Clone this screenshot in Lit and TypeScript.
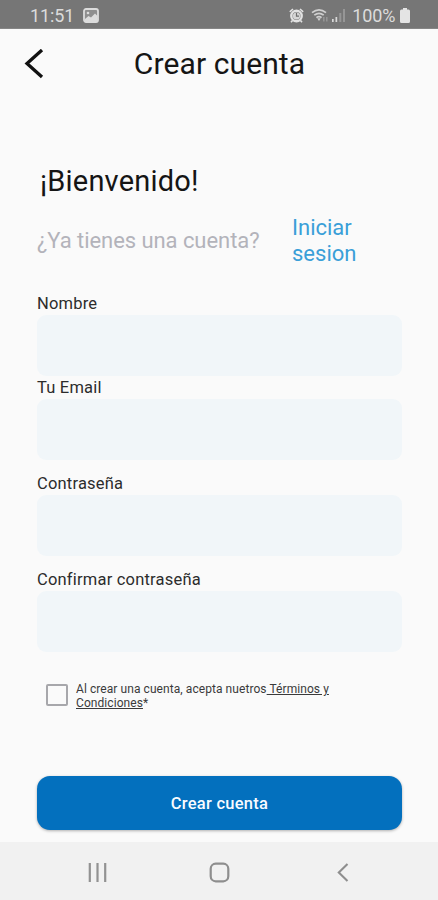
import { LitElement, html, css } from "lit";
import { customElement, property } from "lit/decorators.js";

@customElement("status-bar")
class StatusBar extends LitElement {
  static styles = css`
    :host { display: flex; align-items: center; box-sizing: border-box; height: 29px; padding: 2px 28.5px 0 30px; background: #767676; color: #dcdcdc; font-size: 18px; line-height: 27px; border-bottom: 1px solid #868686; }
    .time { letter-spacing: -0.1px; }
    svg { display: block; flex: none; }
    .picture { margin-left: 9px; }
    .spacer { flex: 1; }
    .wifi { margin-left: 7px; }
    .signal { margin-left: 3px; }
    .percent { margin: 0 4px 0 6px; letter-spacing: -0.05px; }
  `;
  render() {
    return html`
      <span class="time">11:51</span>
      <svg class="picture" width="16" height="15" viewBox="0 0 16 15">
        <rect x="1" y="1" width="14" height="13" rx="2" fill="#8e8e8e" stroke="#dcdcdc" stroke-width="1.8"/>
        <circle cx="5" cy="5" r="1.3" fill="#dcdcdc"/>
        <path d="M2 11 5.5 8 8 9.5 12 5.5 14.5 8V13H2Z" fill="#dcdcdc"/>
      </svg>
      <span class="spacer"></span>
      <svg width="15" height="15" viewBox="0 0 15 15">
        <circle cx="7.5" cy="8" r="5.2" fill="#7c7c7c" stroke="#e2e2e2" stroke-width="2.4"/>
        <circle cx="7.5" cy="8" r="3.6" fill="#d6d6d6"/>
        <path d="M.8 3.8 4 1M11 1l3.2 2.8M3.5 12.5 2 14.3M11.5 12.5l1.5 1.8" stroke="#e2e2e2" stroke-width="1.6"/>
        <path d="M7.5 5v3.2H10" fill="none" stroke="#6d6d6d" stroke-width="1.2"/>
      </svg>
      <svg class="wifi" width="18" height="15" viewBox="0 0 18 15" fill="none" stroke="#cfcfcf" stroke-width="1.7">
        <path d="M1 4.6Q8 -.9 15 4.6M3.3 7.2Q8 3.4 12.7 7.2M5.4 9.6Q8 7.6 10.6 9.6"/>
        <path d="M6.2 10.2H9.8L8 13Z" fill="#cfcfcf" stroke="none"/>
        <path d="M12.8 9v4.5M15.8 9v4.5" stroke="#989898" stroke-width="1.4"/>
      </svg>
      <svg class="signal" width="14" height="15" viewBox="0 0 14 15">
        <path d="M0 11h1.7v3H0ZM3.5 9h1.7v5H3.5Z" fill="#d8d8d8"/>
        <path d="M7.3 5h2v9h-2ZM11 1h2v13h-2Z" fill="#969696"/>
      </svg>
      <span class="percent">100%</span>
      <svg width="10" height="15" viewBox="0 0 10 15"><path d="M3 0h4v1.5h1.5Q10 1.5 10 3v10.5Q10 15 8.5 15h-7Q0 15 0 13.5V3Q0 1.5 1.5 1.5H3Z" fill="#e4e4e4"/></svg>
    `;
  }
}

@customElement("form-field")
class FormField extends LitElement {
  @property() label = "";
  static styles = css`
    :host { display: block; }
    label { display: block; font-size: 16.5px; letter-spacing: 0.2px; line-height: 20px; color: #2c2c2c; white-space: nowrap; }
    input { display: block; box-sizing: border-box; width: 100%; height: 61px; margin-top: 1px; padding: 0 16px; border: 0; border-radius: 9px; background: #f1f6f9; font: 17px Roboto, sans-serif; outline: none; }
  `;
  render() {
    return html`<label for="field">${this.label}</label><input id="field" />`;
  }
}

@customElement("app-root")
class AppRoot extends LitElement {
  static styles = css`
    :host { display: flex; flex-direction: column; box-sizing: border-box; width: 438px; height: 900px; background: #fafafa; font-family: Roboto, "Liberation Sans", sans-serif; overflow: hidden; }
    svg { display: block; }
    header { display: grid; grid-template-columns: 50px 1fr 50px; align-items: center; height: 70px; flex: none; }
    .back { margin-left: 24px; }
    h1 { margin: 0; padding-left: 1px; text-align: center; font-size: 30px; letter-spacing: 0.1px; line-height: 36px; font-weight: 400; color: #151515; white-space: nowrap; }
    main { display: flex; flex-direction: column; flex: 1; padding: 64px 36px 0 37px; }
    h2 { margin: 0 0 0 3px; font-size: 29px; letter-spacing: 0.2px; line-height: 36px; font-weight: 400; color: #151515; white-space: nowrap; }
    .account { display: flex; align-items: center; height: 51px; margin-top: 16px; font-size: 22px; line-height: 25.5px; }
    .question { width: 255px; color: #b3b3ba; letter-spacing: -0.06px; white-space: nowrap; }
    .login { width: 80px; color: #3a9fd8; }
    .fields { display: flex; flex-direction: column; margin-top: 28px; }
    .gap-s { margin-top: 2px; }
    .gap-l { margin-top: 14px; }
    .terms { display: flex; align-items: flex-start; margin: 29px 0 0 8px; }
    .box { box-sizing: border-box; width: 22px; height: 22px; margin: 3px 0 0 1px; border: 2px solid #a7a7ab; border-radius: 2px; }
    .terms p { width: 270px; margin: 1px 0 0 8px; font-size: 12px; letter-spacing: 0.07px; line-height: 14px; color: #3a3a3a; }
    .terms u { text-underline-offset: 1px; }
    .submit { display: block; height: 54px; margin-top: 66px; padding: 1px 0 0; border: 0; border-radius: 13px; background: #0370be; color: #f8fbff; font: 500 16.5px Roboto, sans-serif; letter-spacing: 0.25px; box-shadow: 0 1px 3px rgba(0, 0, 0, .3); }
    nav { display: flex; flex: none; justify-content: space-between; align-items: center; height: 58px; box-sizing: border-box; padding: 3px 89px 0 88px; background: #f1f1f1; }
    .home { margin-right: 5px; }
  `;
  render() {
    return html`
      <status-bar></status-bar>
      <header>
        <svg class="back" width="20" height="30" viewBox="0 0 20 30"><path d="M18 1 3 14.5 18 28" fill="none" stroke="#111" stroke-width="3.3"/></svg>
        <h1>Crear cuenta</h1>
      </header>
      <main>
        <h2>¡Bienvenido!</h2>
        <div class="account">
          <span class="question">¿Ya tienes una cuenta?</span>
          <span class="login">Iniciar sesion</span>
        </div>
        <div class="fields">
          <form-field label="Nombre"></form-field>
          <form-field class="gap-s" label="Tu Email"></form-field>
          <form-field class="gap-l" label="Contraseña"></form-field>
          <form-field class="gap-l" label="Confirmar contraseña"></form-field>
        </div>
        <div class="terms">
          <span class="box" role="checkbox" aria-checked="false"></span>
          <p>Al crear una cuenta, acepta nuetros<u> Términos y Condiciones</u>*</p>
        </div>
        <button class="submit">Crear cuenta</button>
      </main>
      <nav>
        <svg width="19" height="19" viewBox="0 0 19 19"><path d="M1.8 0v19M9.5 0v19M17.2 0v19" stroke="#929292" stroke-width="2.2"/></svg>
        <svg class="home" width="21" height="21" viewBox="0 0 21 21"><rect x="1.7" y="1.7" width="17.6" height="17.6" rx="5" fill="none" stroke="#8e8e8e" stroke-width="2.2"/></svg>
        <svg width="12" height="19" viewBox="0 0 12 19"><path d="M10.5 1 1.8 9.5l8.7 8.5" fill="none" stroke="#8e8e8e" stroke-width="2.1"/></svg>
      </nav>
    `;
  }
}
